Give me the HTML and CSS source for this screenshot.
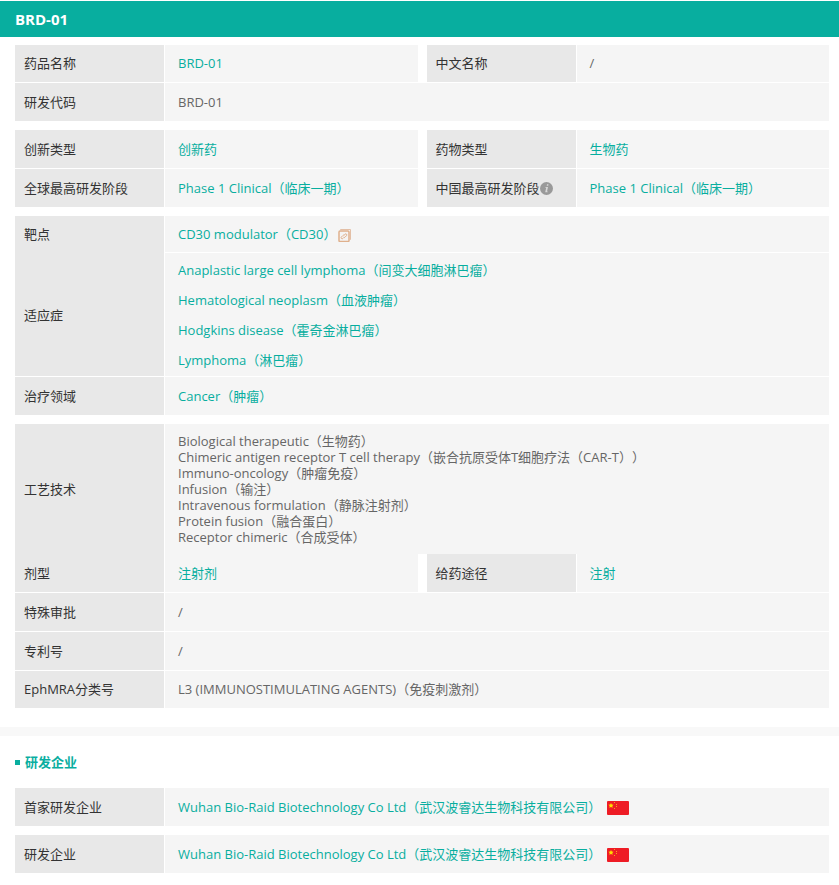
FILE: index.html
```html
<!DOCTYPE html>
<html lang="zh-CN">
<head>
    <meta charset="UTF-8">
    <meta name="viewport" content="width=device-width, initial-scale=1.0">
    <title>BRD-01</title>
    <link rel="stylesheet" href="styles.css">
</head>
<body>
    <!-- shared icons -->
    <svg class="sprite" aria-hidden="true">
        <symbol id="flag-cn" viewBox="0 0 22 14">
            <rect width="22" height="14" rx="1" fill="#ee1c25"/>
            <path fill="#ffde00" d="M4 2l.8 1.600 1.800.2-1.300 1.200.4 1.800L4 6l-1.700.8.4-1.800L1.400 3.800l1.800-.2z"/>
            <g fill="#f9a01b">
                <rect x="7" y="1" width="1" height="1"/>
                <rect x="9" y="3" width="1" height="1"/>
                <rect x="9" y="5" width="1" height="1"/>
                <rect x="7" y="7" width="1" height="1"/>
            </g>
        </symbol>
    </svg>

    <header class="page-header">
        <h1>BRD-01</h1>
    </header>

    <main>
        <section class="detail">
            <dl class="group">
                <div class="row row-short">
                    <div class="pair"><dt>药品名称</dt><dd><a href="#">BRD-01</a></dd></div>
                    <div class="pair"><dt>中文名称</dt><dd>/</dd></div>
                </div>
                <div class="row">
                    <div class="pair"><dt>研发代码</dt><dd>BRD-01</dd></div>
                </div>
            </dl>

            <dl class="group">
                <div class="row">
                    <div class="pair"><dt>创新类型</dt><dd><a href="#">创新药</a></dd></div>
                    <div class="pair"><dt>药物类型</dt><dd><a href="#">生物药</a></dd></div>
                </div>
                <div class="row">
                    <div class="pair"><dt>全球最高研发阶段</dt><dd><a href="#">Phase 1 Clinical（临床一期）</a></dd></div>
                    <div class="pair">
                        <dt>中国最高研发阶段
                            <svg class="icon-info" viewBox="0 0 13 13" aria-hidden="true">
                                <circle cx="6.5" cy="6.5" r="6.5" fill="#999"/>
                                <path d="M7 2.300h1.500L8.200 3.800H6.700zM5.500 5h2.500L7 9.500h.8L7.600 10.300H5.200L6.200 5.800h-.9z" fill="#d8d8d8"/>
                            </svg>
                        </dt>
                        <dd><a href="#">Phase 1 Clinical（临床一期）</a></dd>
                    </div>
                </div>
            </dl>

            <dl class="group">
                <div class="row row-target row-joined">
                    <div class="pair">
                        <dt>靶点</dt>
                        <dd>
                            <a href="#">CD30 modulator（CD30）</a>
                            <a class="copy-link" href="#" aria-label="CD30">
                                <svg viewBox="0 0 13 13" fill="none" stroke="#dfb08c" aria-hidden="true">
                                    <path d="M2.500 1V.5h10v10H12" stroke="#e3bfa6"/>
                                    <rect x="1" y="2" width="10" height="10.500" rx="1" stroke-width="1.500"/>
                                    <path d="M5.700 8.700L4.900 9.500a1 1 0 0 1-1.500-1.500L4.900 6.500a1 1 0 0 1 1.500 0M6.200 6L7 5.200a1 1 0 0 1 1.500 1.500L7 8.200a1 1 0 0 1-1.500 0"/>
                                </svg>
                            </a>
                        </dd>
                    </div>
                </div>
                <div class="row">
                    <div class="pair">
                        <dt>适应症</dt>
                        <dd>
                            <ul class="indications">
                                <li><a href="#">Anaplastic large cell lymphoma（间变大细胞淋巴瘤）</a></li>
                                <li><a href="#">Hematological neoplasm（血液肿瘤）</a></li>
                                <li><a href="#">Hodgkins disease（霍奇金淋巴瘤）</a></li>
                                <li><a href="#">Lymphoma（淋巴瘤）</a></li>
                            </ul>
                        </dd>
                    </div>
                </div>
                <div class="row">
                    <div class="pair"><dt>治疗领域</dt><dd><a href="#">Cancer（肿瘤）</a></dd></div>
                </div>
            </dl>

            <dl class="group">
                <div class="row row-flush">
                    <div class="pair">
                        <dt>工艺技术</dt>
                        <dd>
                            <ul class="technologies">
                                <li>Biological therapeutic（生物药）</li>
                                <li>Chimeric antigen receptor T cell therapy（嵌合抗原受体T细胞疗法（CAR-T））</li>
                                <li>Immuno-oncology（肿瘤免疫）</li>
                                <li>Infusion（输注）</li>
                                <li>Intravenous formulation（静脉注射剂）</li>
                                <li>Protein fusion（融合蛋白）</li>
                                <li>Receptor chimeric（合成受体）</li>
                            </ul>
                        </dd>
                    </div>
                </div>
                <div class="row">
                    <div class="pair"><dt>剂型</dt><dd><a href="#">注射剂</a></dd></div>
                    <div class="pair"><dt>给药途径</dt><dd><a href="#">注射</a></dd></div>
                </div>
                <div class="row">
                    <div class="pair"><dt>特殊审批</dt><dd>/</dd></div>
                </div>
                <div class="row">
                    <div class="pair"><dt>专利号</dt><dd>/</dd></div>
                </div>
                <div class="row row-short">
                    <div class="pair"><dt>EphMRA分类号</dt><dd>L3 (IMMUNOSTIMULATING AGENTS)（免疫刺激剂）</dd></div>
                </div>
            </dl>
        </section>

        <section class="detail companies">
            <h2>研发企业</h2>
            <dl class="group">
                <div class="row">
                    <div class="pair">
                        <dt>首家研发企业</dt>
                        <dd>
                            <a href="#">Wuhan Bio-Raid Biotechnology Co Ltd（武汉波睿达生物科技有限公司）</a>
                            <svg class="flag" role="img" aria-label="中国"><use href="#flag-cn"/></svg>
                        </dd>
                    </div>
                </div>
            </dl>
            <dl class="group">
                <div class="row">
                    <div class="pair">
                        <dt>研发企业</dt>
                        <dd>
                            <a href="#">Wuhan Bio-Raid Biotechnology Co Ltd（武汉波睿达生物科技有限公司）</a>
                            <svg class="flag" role="img" aria-label="中国"><use href="#flag-cn"/></svg>
                        </dd>
                    </div>
                </div>
            </dl>
        </section>
    </main>
</body>
</html>
```
FILE: styles.css
```css
* {
    box-sizing: border-box;
}
body {
    margin: 0;
    padding-top: 1px;
    background: #fff;
    color: #666;
    font-family: "Open Sans", "Noto Sans CJK SC", sans-serif;
    font-size: 13px;
    line-height: 16px;
    text-spacing-trim: space-all;
}
a {
    color: #08ae9f;
    text-decoration: none;
}
a:hover {
    text-decoration: underline;
}
dl, dd, ul, h1, h2 {
    margin: 0;
    padding: 0;
}
ul {
    list-style: none;
}
.sprite {
    display: none;
}
.page-header {
    background: #08ae9f;
    padding: 0 15px;
}
.page-header h1 {
    color: #fff;
    font-size: 15px;
    font-weight: 700;
    line-height: 36px;
}
.detail {
    display: flex;
    flex-direction: column;
    gap: 9px;
    padding: 8px 10px 19px 15px;
}
.group {
    display: flex;
    flex-direction: column;
    gap: 1px;
}
.row {
    display: flex;
    gap: 9px;
    min-height: 38px;
}
.row-short {
    min-height: 37px;
}
.row-target {
    min-height: 36px;
}
.row-flush {
    margin-bottom: -1px;
}
.pair {
    display: flex;
    flex: 1;
    gap: 1px;
}
.pair dt {
    display: flex;
    align-items: center;
    width: 149px;
    padding: 0 9px;
    background: #e8e8e8;
    color: #333;
}
.pair dd {
    display: flex;
    flex: 1;
    align-items: center;
    padding: 0 13px;
    background: #f5f5f5;
}
.row-short dt,
.row-short dd,
.row-target dd {
    padding-bottom: 1px;
}
/* label column runs through without a divider */
.row-joined dt {
    box-shadow: 0 1px 0 #e8e8e8;
}
.icon-info {
    width: 13px;
    height: 13px;
}
.copy-link {
    display: flex;
    padding: 4px 0 0 2px;
}
.copy-link svg {
    width: 13px;
    height: 13px;
}
.indications {
    padding: 2px 0 1px;
    line-height: 30px;
}
.technologies {
    padding: 9px 0;
}
.companies {
    border-top: 9px solid #f8f8f8;
    padding-top: 18px;
}
.companies h2 {
    display: flex;
    align-items: center;
    gap: 5px;
    margin-bottom: 9px;
    color: #08ae9f;
    font-size: 13px;
    font-weight: 700;
    line-height: 16px;
}
.companies h2::before {
    content: "";
    width: 5px;
    height: 5px;
    background: #08ae9f;
}
.flag {
    width: 22px;
    height: 14px;
    margin: 2px 0 0 6px;
}
```
